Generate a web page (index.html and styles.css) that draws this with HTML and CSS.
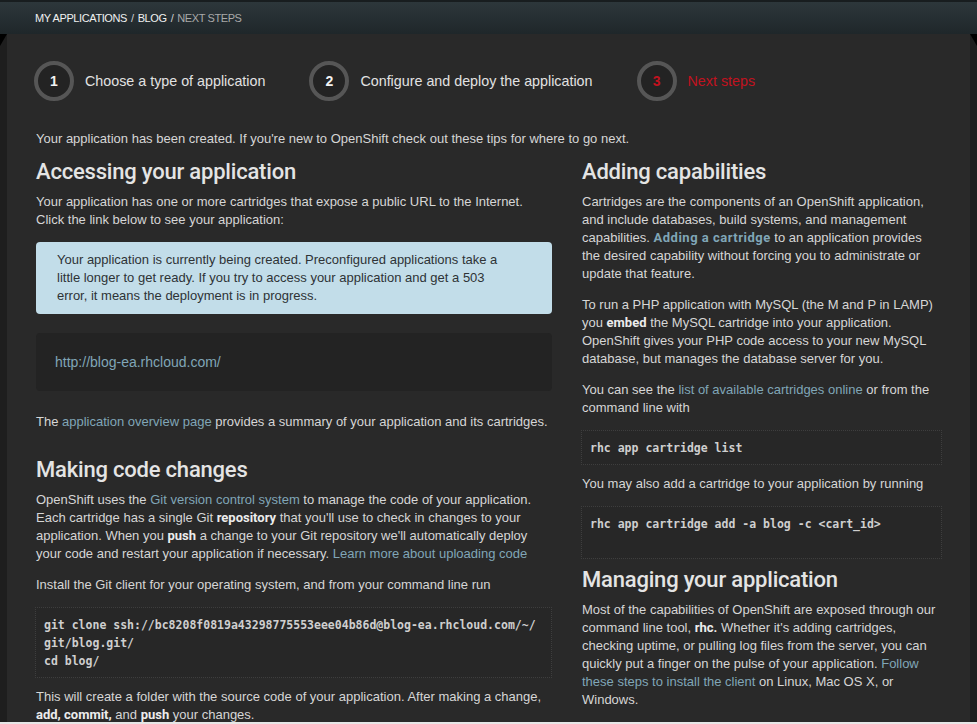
FILE: index.html
```html
<!DOCTYPE html>
<html>
<head>
<meta charset="utf-8">
<link rel="stylesheet" href="styles.css">
<title>Next steps</title>
</head>
<body>
<div class="page">
  <header class="topbar">
    <nav class="crumbs">
      <a href="#" class="crumb">My Applications</a><span class="sep">/</span><a href="#" class="crumb">Blog</a><span class="sep">/</span><span class="crumb current">Next Steps</span>
    </nav>
  </header>
  <div class="frame">
    <main class="panel">
      <ol class="steps">
        <li class="step"><span class="num">1</span><span class="label">Choose a type of application</span></li>
        <li class="step"><span class="num">2</span><span class="label">Configure and deploy the application</span></li>
        <li class="step active"><span class="num">3</span><span class="label">Next steps</span></li>
      </ol>
      <p class="intro">Your application has been created. If you're new to OpenShift check out these tips for where to go next.</p>
      <div class="cols">
        <section class="col left">
          <h2>Accessing your application</h2>
          <p>Your application has one or more cartridges that expose a public URL to the Internet. Click the link below to see your application:</p>
          <div class="alert">Your application is currently being created. Preconfigured applications take a little longer to get ready. If you try to access your application and get a 503 error, it means the deployment is in progress.</div>
          <div class="urlbox"><a href="#">http://blog-ea.rhcloud.com/</a></div>
          <p>The <a href="#">application overview page</a> provides a summary of your application and its cartridges.</p>
          <h2 class="spaced">Making code changes</h2>
          <p>OpenShift uses the <a href="#">Git version control system</a> to manage the code of your application. Each cartridge has a single Git <b>repository</b> that you'll use to check in changes to your application. When you <b>push</b> a change to your Git repository we'll automatically deploy your code and restart your application if necessary. <a href="#">Learn more about uploading code</a></p>
          <p>Install the Git client for your operating system, and from your command line run</p>
          <pre class="code">git clone ssh://bc8208f0819a43298775553eee04b86d@blog-ea.rhcloud.com/~/
git/blog.git/
cd blog/</pre>
          <p>This will create a folder with the source code of your application. After making a change, <b>add, commit,</b> and <b>push</b> your changes.</p>
        </section>
        <section class="col right">
          <h2>Adding capabilities</h2>
          <p>Cartridges are the components of an OpenShift application, and include databases, build systems, and management capabilities. <a href="#" class="strong">Adding a cartridge</a> to an application provides the desired capability without forcing you to administrate or update that feature.</p>
          <p>To run a PHP application with MySQL (the M and P in LAMP) you <b>embed</b> the MySQL cartridge into your application. OpenShift gives your PHP code access to your new MySQL database, but manages the database server for you.</p>
          <p>You can see the <a href="#">list of available cartridges online</a> or from the command line with</p>
          <pre class="code">rhc app cartridge list</pre>
          <p>You may also add a cartridge to your application by running</p>
          <pre class="code tall">rhc app cartridge add -a blog -c &lt;cart_id&gt;</pre>
          <h2 class="tight">Managing your application</h2>
          <p>Most of the capabilities of OpenShift are exposed through our command line tool, <b>rhc.</b> Whether it's adding cartridges, checking uptime, or pulling log files from the server, you can quickly put a finger on the pulse of your application. <a href="#">Follow these steps to install the client</a> on Linux, Mac OS X, or Windows.</p>
        </section>
      </div>
    </main>
  </div>
</div>
</body>
</html>
```
FILE: styles.css
```css
html, body {
  margin: 0;
  padding: 0;
}
body {
  background: #e6e6e6;
  font-family: "Liberation Sans", Arial, sans-serif;
  font-size: 13px;
  line-height: 18px;
  color: #d6d6d6;
}
.page {
  width: 977px;
  height: 724px;
  overflow: hidden;
  background: #e6e6e6;
}
.topbar {
  height: 32px;
  border-top: 2px solid #181d1f;
  background: linear-gradient(#2d373b, #1f272a);
  display: flex;
  align-items: center;
}
.crumbs {
  padding-left: 35px;
  font-size: 11px;
  text-transform: uppercase;
  letter-spacing: -0.4px;
}
.crumb {
  color: #f0f0f0;
  text-decoration: none;
}
.crumb.current {
  color: #a9a9a9;
}
.sep {
  color: #cfcfcf;
  margin: 0 4px;
}
.frame {
  background: #1e1e1e;
  padding: 0 7px;
  position: relative;
  height: 688px;
}
.frame::before, .frame::after {
  content: "";
  position: absolute;
  top: 0;
  width: 0;
  height: 0;
  border-top: 12px solid #000;
}
.frame::before {
  left: 0;
  border-right: 7px solid transparent;
}
.frame::after {
  right: 0;
  border-left: 7px solid transparent;
}
.panel {
  background: #292929;
  height: 100%;
  padding: 27px 28px 0 29px;
  box-sizing: border-box;
}
.steps {
  list-style: none;
  margin: 0 0 0 -2px;
  padding: 0;
  display: flex;
  gap: 44px;
}
.step {
  display: flex;
  align-items: center;
  gap: 11px;
}
.num {
  width: 32px;
  height: 32px;
  border: 4px solid #565656;
  border-radius: 50%;
  background: #232323;
  display: flex;
  align-items: center;
  justify-content: center;
  font-weight: bold;
  font-size: 14px;
  color: #f2f2f2;
}
.label {
  font-size: 14.3px;
  color: #e2e2e2;
}
.step.active .num, .step.active .label {
  color: #c1121f;
}
.intro {
  margin: 29px 0 11px;
}
.cols {
  display: grid;
  grid-template-columns: 516px 360px;
  gap: 30px;
}
h2 {
  font-family: Roboto, "Liberation Sans", sans-serif;
  font-weight: 500;
  font-size: 22px;
  line-height: 26px;
  color: #e4e4e4;
  margin: 0 0 8px;
  letter-spacing: -0.2px;
}
h2.spaced {
  margin-top: 26px;
}
h2.tight {
  margin-top: -2px;
}
p {
  margin: 0 0 13px;
}
a {
  color: #80a6b7;
  text-decoration: none;
}
a.strong, b {
  font-family: Roboto, "Liberation Sans", sans-serif;
  font-weight: bold;
}
a.strong {
  letter-spacing: 0.5px;
}
b {
  color: #ececec;
}
.alert {
  background: #c2dde9;
  color: #2e3336;
  border-radius: 4px;
  padding: 9px 40px 9px 21px;
  margin-bottom: 19px;
}
.urlbox {
  background: #232323;
  border-radius: 4px;
  padding: 20px 20px 20px 19px;
  margin-bottom: 22px;
  font-size: 14px;
}
.code {
  font-family: "DejaVu Sans Mono", monospace;
  font-weight: bold;
  font-size: 11.5px;
  line-height: 18px;
  color: #cfcfcf;
  background: #272727;
  border: 1px dotted #3e3e3e;
  padding: 8px 8px 7px 8px;
  margin: 0 0 10px -1px;
  white-space: pre-wrap;
}
.code.tall {
  padding-bottom: 25px;
}
```
